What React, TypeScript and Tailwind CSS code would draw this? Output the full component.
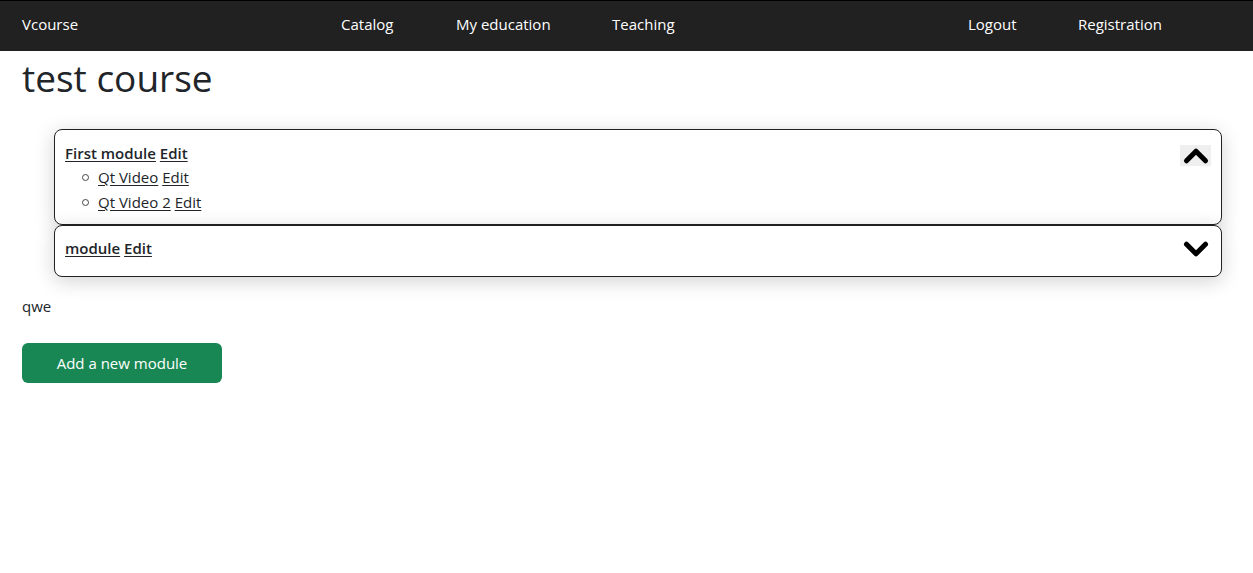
import { ChevronDown, ChevronUp } from "lucide-react";

const modules = [
  { title: "First module", open: true, lessons: ["Qt Video", "Qt Video 2"] },
  { title: "module", open: false, lessons: [] as string[] },
];

export default function App() {
  return (
    <div className="min-h-screen bg-white text-[#212529] font-['Open_Sans',sans-serif] text-[16px]">
      {/* navbar */}
      <nav className="h-[51px] bg-[#212121] border-t border-black flex items-center pb-[4px] px-[22px] text-white text-[15px]">
        <a className="w-[319px]">Vcourse</a>
        <a className="w-[115px]">Catalog</a>
        <a className="w-[156px]">My education</a>
        <a className="w-[356px]">Teaching</a>
        <a className="w-[110px]">Logout</a>
        <a>Registration</a>
      </nav>

      <div className="px-[22px]">
        <h1 className="text-[37px] leading-[54px]">test course</h1>

        <div className="ml-[32px] mr-[9px] mt-[24px]">
          {modules.map((m) => (
            <div
              key={m.title}
              className={`relative border border-[#222] rounded-[8px] bg-white shadow-[0_4px_20px_rgba(0,0,0,0.18)] px-[10px] ${
                m.open ? "pt-[11px] pb-[9px]" : "h-[52px] pt-[10px]"
              }`}
            >
              <div className="font-semibold text-[15px] leading-[24px]">
                <a className="underline underline-offset-2">{m.title}</a>{" "}
                <a className="underline underline-offset-2">Edit</a>
              </div>
              {m.lessons.length > 0 && (
                <ul className="pl-[32px] text-[15px]">
                  {m.lessons.map((l) => (
                    <li key={l} className="leading-[25px] flex items-center">
                      <span className="w-[7px] h-[7px] rounded-full border border-[#444] mr-[9px] -ml-[15px]" />
                      <a className="underline underline-offset-2">{l}</a>
                      <span>&nbsp;</span>
                      <a className="underline underline-offset-2">Edit</a>
                    </li>
                  ))}
                </ul>
              )}
              <div
                className={`absolute right-[10px] w-[31px] h-[21px] flex items-center justify-center ${
                  m.open ? "top-[15px] bg-[#efefef]" : "top-[12px]"
                }`}
              >
                {m.open ? (
                  <ChevronUp className="w-[38px] h-[38px] shrink-0" strokeWidth={3.2} color="#000" />
                ) : (
                  <ChevronDown className="w-[38px] h-[38px] shrink-0" strokeWidth={3.2} color="#000" />
                )}
              </div>
            </div>
          ))}
        </div>

        <p className="mt-[17px] leading-[24px] text-[15px]">qwe</p>

        <button className="mt-[25px] w-[200px] h-[40px] rounded-[6px] bg-[#198754] text-white text-[15px]">
          Add a new module
        </button>
      </div>
    </div>
  );
}
